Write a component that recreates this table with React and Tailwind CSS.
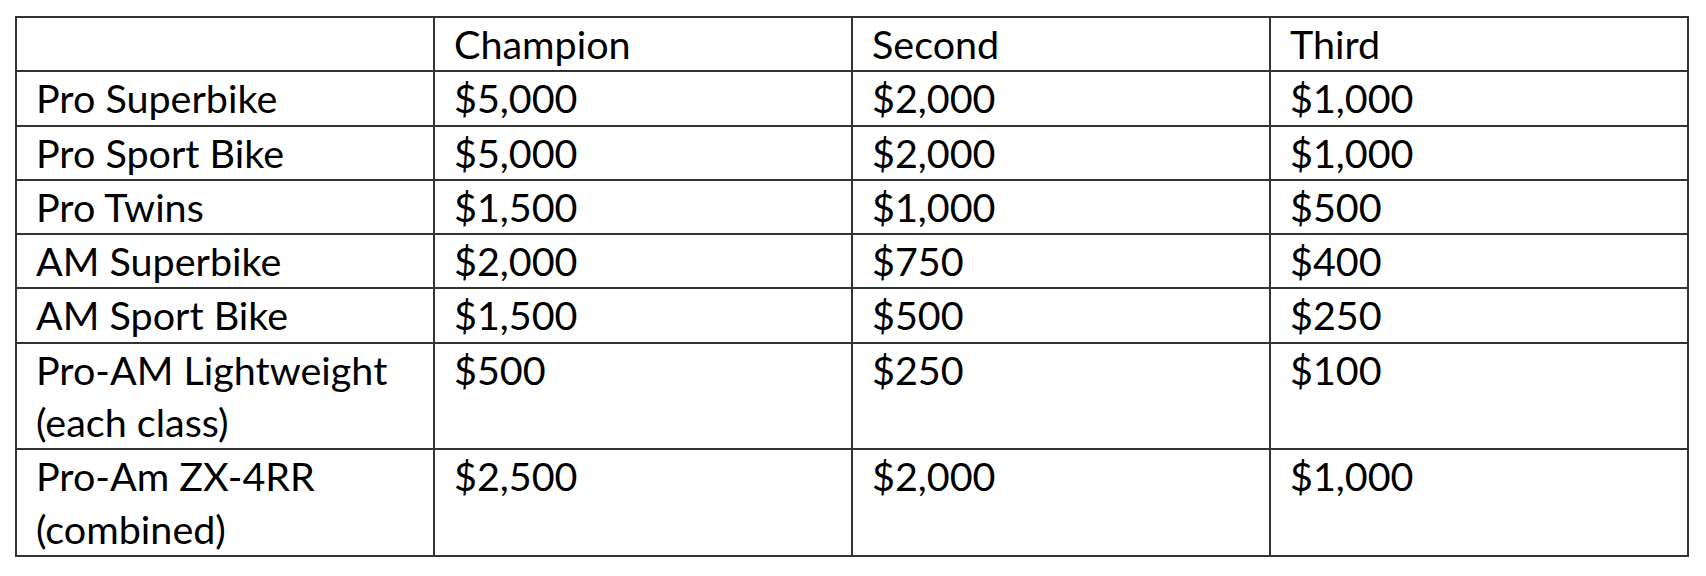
const rows = [
  ["Pro Superbike", "$5,000", "$2,000", "$1,000"],
  ["Pro Sport Bike", "$5,000", "$2,000", "$1,000"],
  ["Pro Twins", "$1,500", "$1,000", "$500"],
  ["AM Superbike", "$2,000", "$750", "$400"],
  ["AM Sport Bike", "$1,500", "$500", "$250"],
  [["Pro-AM Lightweight", "(each class)"], "$500", "$250", "$100"],
  [["Pro-Am ZX-4RR", "(combined)"], "$2,500", "$2,000", "$1,000"],
];

const cell = "border-2 border-[#333] px-[19px] py-0 align-top text-left font-normal";

const App = () => {
  return (
    <div className="min-h-screen bg-white pl-[15px] pt-[16px] text-black font-['Lato',sans-serif] text-[39.5px] leading-[52.3px]">
      <table className="w-[1672px] table-fixed border-collapse">
        <colgroup>
          <col className="w-[418px]" />
          <col className="w-[418px]" />
          <col className="w-[418px]" />
          <col className="w-[418px]" />
        </colgroup>
        <thead>
          <tr>
            <th className={cell}></th>
            <th className={cell}>Champion</th>
            <th className={cell}>Second</th>
            <th className={cell}>Third</th>
          </tr>
        </thead>
        <tbody>
          {rows.map((row, i) => (
            <tr key={i}>
              {row.map((value, j) => (
                <td key={j} className={cell}>
                  {Array.isArray(value) ? (
                    <>
                      {value[0]}
                      <br />
                      {value[1]}
                    </>
                  ) : (
                    value
                  )}
                </td>
              ))}
            </tr>
          ))}
        </tbody>
      </table>
    </div>
  );
};

export default App;
